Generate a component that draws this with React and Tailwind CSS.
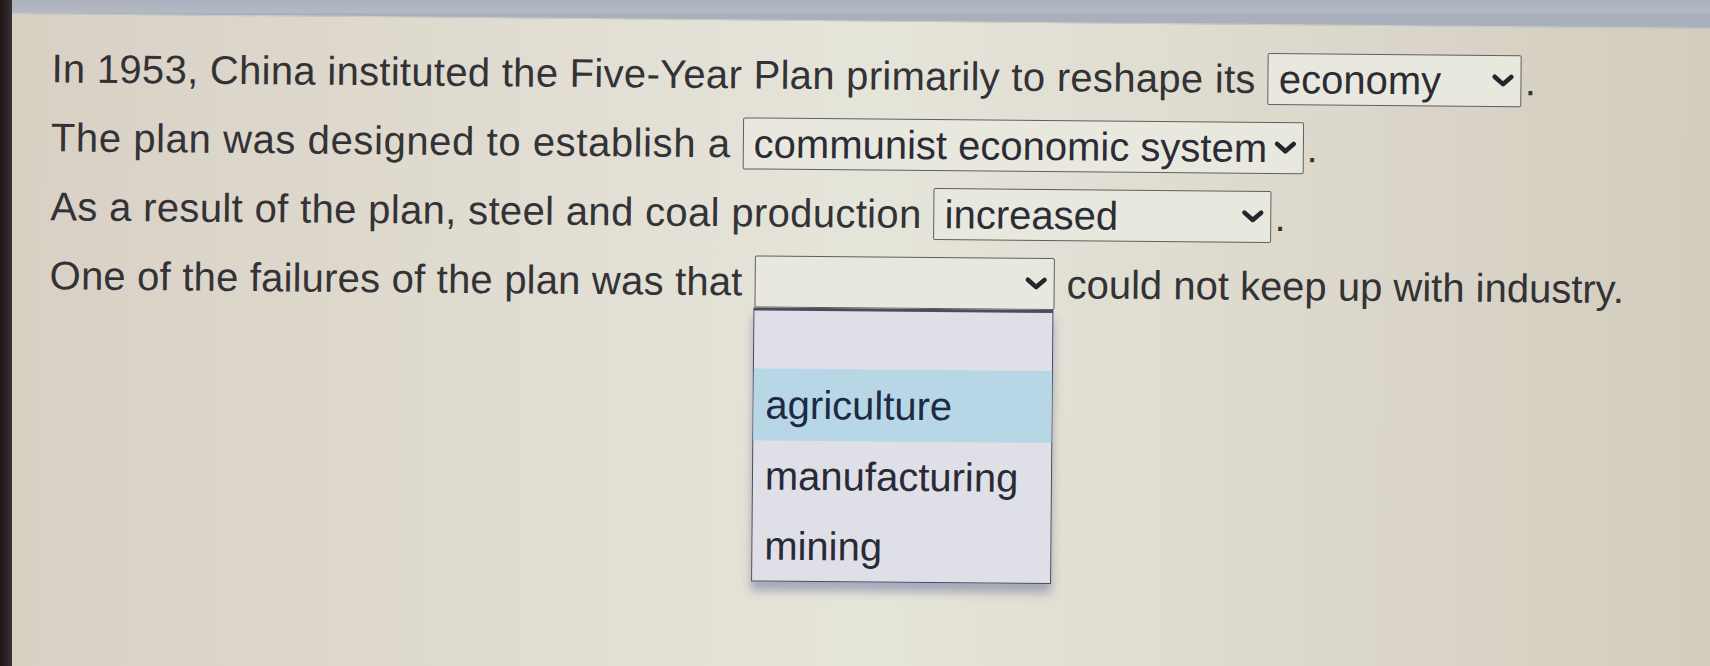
import { useState } from "react";

const rows = [
  {
    before: "In 1953, China instituted the Five-Year Plan primarily to reshape its",
    value: "economy",
    width: "w-[254px]",
    track: "tracking-[0.3px]",
    after: ".",
  },
  {
    before: "The plan was designed to establish a",
    value: "communist economic system",
    width: "w-[561px]",
    track: "tracking-[0.6px]",
    after: ".",
  },
  {
    before: "As a result of the plan, steel and coal production",
    value: "increased",
    width: "w-[338px]",
    track: "tracking-[0.35px]",
    after: ".",
  },
  {
    before: "One of the failures of the plan was that",
    value: "",
    width: "w-[300px]",
    track: "tracking-[0.2px]",
    after: "could not keep up with industry.",
    open: true,
  },
];

const options = ["agriculture", "manufacturing", "mining"];

const Chevron = () => (
  <svg width="25" height="15" viewBox="0 0 24 14" className="shrink-0">
    <path d="M4 3.5 L12 10.5 L20 3.5" fill="none" stroke="#25252d" strokeWidth="4.4" strokeLinejoin="round" strokeLinecap="round" />
  </svg>
);

const Dropdown = ({ row, selected, onPick }) => (
  <div
    className={`relative ml-[12px] h-[52px] ${row.width} flex items-center justify-between pl-[10px] pr-[5px] bg-[#e9e8df] border-[1.5px] border-[#5f5f64] rounded-[2px] shrink-0`}
  >
    <span className="whitespace-nowrap text-[#2c2c36]">{selected}</span>
    <Chevron />
    {row.open && (
      <div className="absolute top-[calc(100%+1px)] -left-[2px] w-[calc(100%+2px)] bg-[#dfe0e7] border-[1.5px] border-t-[3px] border-[#4b4b60] shadow-[0_9px_10px_rgba(70,80,140,0.4)] z-10">
        <div className="h-[58px]" />
        {options.map((o, i) => (
          <div
            key={o}
            onClick={() => onPick(o)}
            className={`flex items-center pl-[12px] ${i === 0 ? "h-[72px] bg-[#b8d7e6] text-[#1d2a45]" : "h-[70px] text-[#2a2a36]"}`}
          >
            {o}
          </div>
        ))}
      </div>
    )}
  </div>
);

export default function App() {
  const [picked, setPicked] = useState({});

  return (
    <div className="w-[1710px] h-[666px] overflow-hidden flex bg-[#a9b0bc] font-['Liberation_Sans',Arial,sans-serif]">
      <div className="w-[12px] shrink-0 bg-linear-to-r from-[#1c1616] to-[#3a3232] z-20" />
      <div className="flex-1 flex flex-col">
        <div className="h-[13px] shrink-0 bg-linear-to-b from-[#aab1bd] to-[#b4bac3]" />
        <div className="origin-top-left rotate-[0.5deg] w-[1720px] h-[690px] border-t border-[#c9ccc6] bg-linear-to-r from-[#d9d0c4] via-[#e6e5da] to-[#d3ccbe] pl-[40px] pt-[19px] text-[40px] text-[#333337]">
          {rows.map((row, i) => (
            <div key={i} className="h-[69px] flex items-center whitespace-nowrap">
              <span className={row.track}>{row.before}</span>
              <Dropdown
                row={row}
                selected={picked[i] ?? row.value}
                onPick={(o) => setPicked({ ...picked, [i]: o })}
              />
              <span className={row.after === "." ? "ml-[3px]" : "ml-[12px]"}>{row.after}</span>
            </div>
          ))}
        </div>
      </div>
    </div>
  );
}
